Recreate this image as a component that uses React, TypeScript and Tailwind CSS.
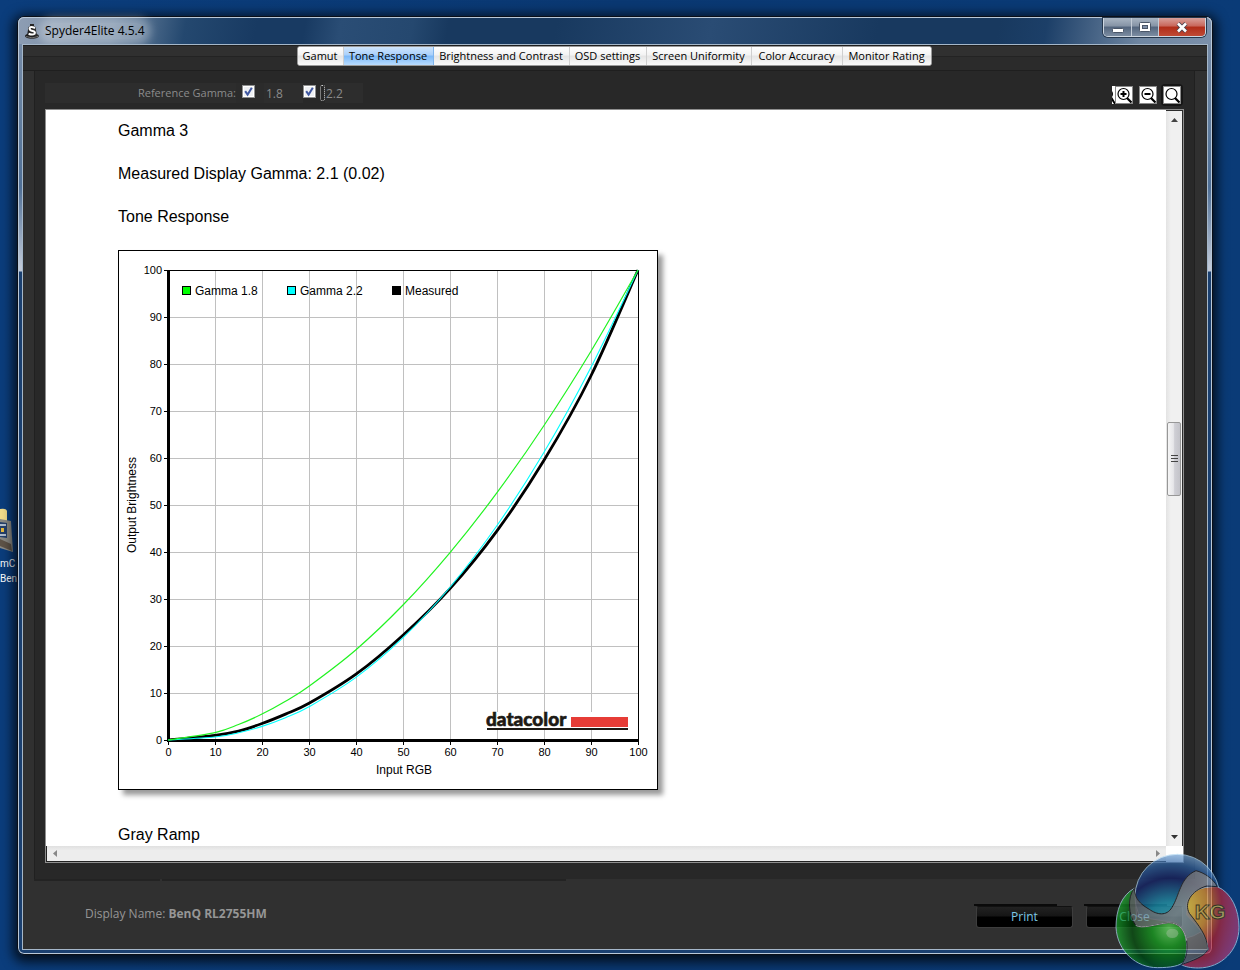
import { useState } from 'react';

const TABS = [
    { name: 'Gamut', width: 'w-[46px]' },
    { name: 'Tone Response', width: 'w-[90px]' },
    { name: 'Brightness and Contrast', width: 'w-[136px]' },
    { name: 'OSD settings', width: 'w-[77px]' },
    { name: 'Screen Uniformity', width: 'w-[105px]' },
    { name: 'Color Accuracy', width: 'w-[91px]' },
    { name: 'Monitor Rating', width: 'w-[88px]' }
];

const TICKS = [0, 10, 20, 30, 40, 50, 60, 70, 80, 90, 100];
const SAMPLES = [0, 10, 15, 20, 25, 30, 40, 50, 60, 70, 80, 90, 100];
const MEASURED = [0, 1, 1.9, 3.5, 5.5, 7.8, 14, 22.3, 32.2, 44.5, 59.5, 77.5, 100];

const plotX = (v: number) => 50 + v * 4.7;
const plotY = (v: number) => 490 - v * 4.7;

// Smooth line through the sample points (Catmull-Rom to bezier)
function curve(values: number[]) {
    const pts = values.map((v, i) => [plotX(SAMPLES[i]), plotY(v)]);
    let d = `M${pts[0][0]},${pts[0][1]}`;
    for (let i = 0; i < pts.length - 1; i++) {
        const a = pts[Math.max(i - 1, 0)];
        const b = pts[i];
        const c = pts[i + 1];
        const e = pts[Math.min(i + 2, pts.length - 1)];
        d += ` C${b[0] + (c[0] - a[0]) / 6},${b[1] + (c[1] - a[1]) / 6} ${c[0] - (e[0] - b[0]) / 6},${c[1] - (e[1] - b[1]) / 6} ${c[0]},${c[1]}`;
    }
    return d;
}

const gammaCurve = (gamma: number) => curve(SAMPLES.map(s => 100 * Math.pow(s / 100, gamma)));

function SpyderIcon() {
    return (
        <svg viewBox="0 0 14 16" className="h-4 w-3.5">
            <ellipse cx="7" cy="13" rx="7" ry="2.8" fill="#1b1b1b" />
            <path d="M5 1 H9 V3 L10.5 4 L12 12.5 Q7 15 2 12.5 L3.5 4 L5 3 Z" fill="#222" />
            <path d="M10 5 Q5 3 4.6 5.4 Q4.6 7.4 7.6 8 Q10.8 8.8 9.6 10.8 Q7.5 12.4 3.6 10.8" fill="none" stroke="#fff" strokeWidth="2" />
            <path d="M1 13.5 Q7 16.2 13 13.5" fill="none" stroke="#888" strokeWidth="0.8" />
        </svg>
    );
}

function WindowButtons() {
    return (
        <div className="flex h-[19px] overflow-hidden rounded-b-[5px] border border-t-0 border-[#cdd6e0] shadow-[0_0_0_1px_#26384d]">
            <button aria-label="Minimize" className="flex w-7 items-center justify-center border-r border-[#c3ccd7] bg-[linear-gradient(#a9b5c3,#8593a5_45%,#53657d_50%,#7b8ca1)]">
                <svg viewBox="0 0 12 5" className="mt-1.5 h-[5px] w-3">
                    <rect x="0.5" y="0.5" width="11" height="4" rx="1" fill="#fff" stroke="#4a5668" />
                </svg>
            </button>
            <button aria-label="Maximize" className="flex w-[27px] items-center justify-center border-r border-[#c3ccd7] bg-[linear-gradient(#a9b5c3,#8593a5_45%,#53657d_50%,#7b8ca1)]">
                <svg viewBox="0 0 12 10" className="h-2.5 w-3">
                    <rect x="0.5" y="0.5" width="11" height="9" rx="1" fill="#fff" stroke="#4a5668" />
                    <rect x="3.5" y="3.5" width="5" height="3" fill="#8090a8" stroke="#4a5668" />
                </svg>
            </button>
            <button aria-label="Close window" className="flex w-[46px] items-center justify-center bg-[linear-gradient(#d9a19b,#c8665a_45%,#b02c18_50%,#c04a35)]">
                <svg viewBox="0 0 12 11" className="h-[11px] w-3">
                    <path d="M2 1.5 L10 9.5 M10 1.5 L2 9.5" stroke="#4d4450" strokeWidth="4.4" />
                    <path d="M2 1.5 L10 9.5 M10 1.5 L2 9.5" stroke="#fff" strokeWidth="2.6" />
                </svg>
            </button>
        </div>
    );
}

function GammaCheckbox({ id, checked, onChange }: { id: string; checked: boolean; onChange: (v: boolean) => void }) {
    return (
        <span className="grid size-[13px]">
            <input
                id={id}
                type="checkbox"
                checked={checked}
                onChange={e => onChange(e.target.checked)}
                className="col-start-1 row-start-1 size-[13px] appearance-none border border-[#8e8f8f] bg-[#eef0f3] outline-none ring-1 ring-inset ring-white"
            />
            {checked && (
                <svg viewBox="0 0 13 13" className="pointer-events-none col-start-1 row-start-1 size-[13px]">
                    <path d="M3.2 6.2 L5.6 9.6 L9.8 2.8" fill="none" stroke="#3f57a0" strokeWidth="2" />
                </svg>
            )}
        </span>
    );
}

function ZoomButton({ label, mark }: { label: string; mark?: string }) {
    return (
        <button aria-label={label} className="size-[18px] border border-[#8a8a8a] bg-white">
            <svg viewBox="0 0 16 16" className="size-4">
                <circle cx="7.5" cy="7" r="5.5" fill="none" stroke="#000" strokeWidth="1.2" />
                <path d="M11 11 L15.5 15.5" stroke="#000" strokeWidth="2.2" />
                {mark && <path d={mark} stroke="#000" strokeWidth="2" />}
            </svg>
        </button>
    );
}

function ToneChart() {
    return (
        <svg
            viewBox="0 0 540 540"
            role="img"
            aria-label="Tone Response"
            className="block size-[540px] bg-white font-['Liberation_Sans',Arial,sans-serif] text-[11px] shadow-[5px_5px_5px_rgba(0,0,0,0.4)]"
        >
            <rect x="0.5" y="0.5" width="539" height="539" fill="#fff" stroke="#000" />
            <g stroke="#c0c0c0" shapeRendering="crispEdges">
                {TICKS.slice(1, -1).map(t => (
                    <g key={t}>
                        <path d={`M${Math.round(plotX(t)) + 0.5},21 V490`} />
                        <path d={`M51,${Math.round(plotY(t)) + 0.5} H520`} />
                    </g>
                ))}
            </g>
            <g stroke="#000" shapeRendering="crispEdges">
                <path d="M50,20.5 H521 M520.5,20 V490" />
                {TICKS.map(t => (
                    <g key={t}>
                        <path d={`M${Math.round(plotX(t)) + 0.5},490 v5`} />
                        <path d={`M46,${Math.round(plotY(t)) + 0.5} h5`} />
                    </g>
                ))}
                <path d="M50.5,20 V492 M49,490.5 H521" strokeWidth="3" />
            </g>

            <path d={curve(MEASURED)} fill="none" stroke="#000" strokeWidth="2.8" />
            <path d={gammaCurve(2.2)} fill="none" stroke="#00ffff" strokeWidth="1.1" />
            <path d={gammaCurve(1.8)} fill="none" stroke="#21f321" strokeWidth="1.2" />

            {TICKS.map(t => (
                <g key={t}>
                    <text x={plotX(t) + 0.5} y="506" textAnchor="middle">{t}</text>
                    <text x="44" y={plotY(t) + 4} textAnchor="end">{t}</text>
                </g>
            ))}

            <g className="text-xs">
                <g stroke="#000" shapeRendering="crispEdges">
                    <rect x="64.5" y="36.5" width="8" height="8" fill="#00ff00" />
                    <rect x="169.5" y="36.5" width="8" height="8" fill="#00ffff" />
                    <rect x="274.5" y="36.5" width="8" height="8" fill="#000" />
                </g>
                <text x="77" y="45">Gamma 1.8</text>
                <text x="182" y="45">Gamma 2.2</text>
                <text x="287" y="45">Measured</text>
                <text x="286" y="524" textAnchor="middle">Input RGB</text>
                <text transform="translate(18 255) rotate(-90)" textAnchor="middle">Output Brightness</text>
            </g>

            {/* datacolor logo */}
            <rect x="369" y="462" width="141" height="18" fill="#fff" />
            <text
                x="368"
                y="476"
                className="font-['Lato',sans-serif] text-[19px] font-black"
                fill="#1d1a15"
                stroke="#1d1a15"
                strokeWidth="0.6"
            >
                datacolor
            </text>
            <rect x="453" y="467" width="57" height="10" fill="#e63c36" />
            <rect x="369" y="478" width="141" height="2" fill="#1d1a15" />
        </svg>
    );
}

function VerticalScrollbar() {
    return (
        <div className="flex w-[17px] flex-col items-center border-t border-r border-[#2c2c2c] bg-[linear-gradient(to_right,#e3e3e3,#f0f0f0_30%,#f0f0f0)]">
            <button aria-label="Scroll up" className="flex h-[18px] w-full items-center justify-center">
                <svg viewBox="0 0 7 4" className="h-1 w-[7px]"><path d="M0 4 L3.5 0 L7 4 Z" fill="#444" /></svg>
            </button>
            <div className="flex-[293]" />
            <div className="flex h-[74px] w-3.5 flex-col items-center justify-center gap-0.5 rounded-xs border border-[#979797] bg-[linear-gradient(to_right,#f5f5f5,#e6e6e9_45%,#cfcfd5_55%,#c3c3c9)]">
                <div className="h-px w-[7px] bg-[#444]" />
                <div className="h-px w-[7px] bg-[#444]" />
                <div className="h-px w-[7px] bg-[#444]" />
            </div>
            <div className="flex-[333]" />
            <button aria-label="Scroll down" className="flex h-[18px] w-full items-center justify-center">
                <svg viewBox="0 0 7 4" className="h-1 w-[7px]"><path d="M0 0 L3.5 4 L7 0 Z" fill="#333" /></svg>
            </button>
        </div>
    );
}

function HorizontalScrollbar() {
    return (
        <div className="flex h-4 bg-white pr-[17px]">
            <div className="flex flex-1 items-center justify-between border-b border-l border-[#222] bg-[linear-gradient(#e0e0e0,#ededed_30%,#ededed)] px-1.5">
                <button aria-label="Scroll left" className="flex h-full items-center">
                    <svg viewBox="0 0 4 7" className="h-[7px] w-1"><path d="M4 0 L0 3.5 L4 7 Z" fill="#888" /></svg>
                </button>
                <button aria-label="Scroll right" className="flex h-full items-center">
                    <svg viewBox="0 0 4 7" className="h-[7px] w-1"><path d="M0 0 L4 3.5 L0 7 Z" fill="#888" /></svg>
                </button>
            </div>
        </div>
    );
}

function FooterButton({ children }: { children: string }) {
    return (
        <div className="w-[97px]">
            <div className="-ml-0.5 h-0.5 w-[83px] bg-[#0a0a0a]" />
            <button className="block h-[22px] w-full rounded-[3px] border border-[#3d3d3d] border-t-[#111] bg-[linear-gradient(#222,#151515_45%,#000_50%,#000)] text-xs leading-[18px] text-[#7cc9e6]">
                {children}
            </button>
        </div>
    );
}

function DesktopShortcut() {
    return (
        <div className="absolute top-[508px] left-0 font-['Roboto','Open_Sans',sans-serif] text-[10px] leading-[15px] text-white">
            <svg viewBox="0 0 17 48" className="h-12 w-[17px]">
                <path d="M0 1 Q6 0 7 3 V34 H0 Z" fill="#f2dc8a" />
                <path d="M0 11 L11 13 L13 44 L0 40 Z" fill="#8b8a84" />
                <path d="M0 14 L7 15 V30 L0 29 Z" fill="#25406b" />
                <path d="M0 17 H6 M0 27 H6" stroke="#dfe6ee" strokeWidth="1.5" />
                <rect x="1" y="20" width="3" height="4" fill="#e6b93c" />
                <path d="M0 31 L11 36 L12 43 L0 38 Z" fill="#5e5347" />
            </svg>
            <div>mC</div>
            <div>Ben</div>
        </div>
    );
}

function KgBadge() {
    return (
        <svg viewBox="225 99 375 351" className="pointer-events-none absolute right-0 bottom-0 h-[117px] w-[125px] opacity-70">
            <defs>
                <radialGradient id="kgBlue" cx="0.42" cy="0.9" r="0.95">
                    <stop offset="0" stopColor="#5fdcec" />
                    <stop offset="0.35" stopColor="#1b9fc0" />
                    <stop offset="0.65" stopColor="#10216c" />
                    <stop offset="0.82" stopColor="#2a5fa2" />
                    <stop offset="1" stopColor="#8cbbe6" />
                </radialGradient>
                <radialGradient id="kgGreen" cx="0.75" cy="0.5" r="0.8">
                    <stop offset="0" stopColor="#6fee6a" />
                    <stop offset="0.3" stopColor="#14a81e" />
                    <stop offset="0.65" stopColor="#04520e" />
                    <stop offset="1" stopColor="#22c238" />
                </radialGradient>
                <radialGradient id="kgRed" cx="0.1" cy="0.25" r="1">
                    <stop offset="0" stopColor="#ffe04e" />
                    <stop offset="0.35" stopColor="#e09a3a" />
                    <stop offset="0.6" stopColor="#b8283c" />
                    <stop offset="1" stopColor="#a83f86" />
                </radialGradient>
                <linearGradient id="kgSteel" x1="0" y1="0" x2="1" y2="1">
                    <stop offset="0" stopColor="#55575c" />
                    <stop offset="0.5" stopColor="#a4a7ad" />
                    <stop offset="1" stopColor="#606267" />
                </linearGradient>
            </defs>
            <g stroke="#b4daf4" strokeWidth="3">
                <circle cx="412" cy="230" r="127" fill="url(#kgBlue)" />
                <path d="M440 250 C450 215 480 198 532 200 C575 218 597 270 597 322 C597 390 545 444 475 444 C452 444 434 440 424 434 C450 420 490 410 504 388 C500 345 470 318 440 285 Z" fill="url(#kgRed)" />
                <path d="M283 205 C245 225 228 270 228 322 C232 395 290 443 352 443 C392 443 420 438 432 425 C450 380 438 310 395 306 L290 290 Z" fill="url(#kgGreen)" />
            </g>
            <path
                d="M468 152 C420 172 418 228 396 262 C380 290 350 284 328 268 C300 252 284 236 283 205 C262 230 264 285 287 316 C305 328 350 312 385 308 C420 308 436 335 440 362 C444 400 436 420 424 434 C456 422 492 412 504 388 C500 345 478 318 448 280 C432 250 452 212 500 198 L532 200 C520 176 492 158 468 152 Z"
                fill="url(#kgSteel)"
                fillOpacity="0.85"
                stroke="#24262b"
                strokeWidth="3"
            />
            <path d="M287 316 C305 328 350 312 385 308 C420 308 436 335 440 362" fill="none" stroke="#d5d8dc" strokeWidth="3" />
            <ellipse cx="397" cy="340" rx="18" ry="14" fill="#c9f5c6" opacity="0.5" />
            <text x="464" y="298" className="font-['Liberation_Sans',Arial,sans-serif] text-[62px] font-bold" fill="#e8c860" stroke="#4c3d18" strokeWidth="3">KG</text>
        </svg>
    );
}

export default function App() {
    const [activeTab, setActiveTab] = useState('Tone Response');
    const [gamma18, setGamma18] = useState(true);
    const [gamma22, setGamma22] = useState(true);

    return (
        <div className="relative flex min-h-screen flex-col overflow-hidden bg-[linear-gradient(to_right,#0b3d7c,#0a3872_50%,#0a3b77)] pt-4 pr-[27px] pb-[15px] pl-[17px] font-['Open_Sans','Noto_Sans',sans-serif] text-xs">
            <DesktopShortcut />

            {/* WINDOW FRAME */}
            <div className="relative flex flex-1 flex-col rounded-[7px] border border-[#0a0f18] bg-[linear-gradient(#7d90aa,#5d7a9c_120px,#4f6f96_170px,#c0c9d8_250px,#c0c9d8_254px,#1b4070_255px,#1b4070)] px-1 pb-1 shadow-[inset_0_0_0_1px_#b9c8d8,0_3px_12px_4px_rgba(0,0,0,0.75)]">
                {/* TITLE BAR */}
                <div className="-mx-1 flex h-[27px] items-start justify-between rounded-t-md border-t border-x border-[#b9c8d8] bg-[linear-gradient(100deg,#8d9db3,#7088a3_8%,#24486f_14%,#183a62_20%,#183a62_24%,#2a4d75_27%,#25486f_33%,#18395f_36%,#18395f_45%,#2a4c74_58%,#18395f_72%,#18395f_82%,#1c3f68_86%,#6f86a1_94%,#7b90ab)] pr-[5px] pl-[6px]">
                    <div className="flex h-[26px] items-center gap-1.5">
                        <SpyderIcon />
                        <h1 className="rounded-full bg-white/30 text-xs text-black shadow-[0_0_8px_6px_rgba(255,255,255,0.3)]">Spyder4Elite 4.5.4</h1>
                    </div>
                    <WindowButtons />
                </div>

                <div className="flex flex-1 flex-col border border-[#a5b7c9] bg-[#303030]">
                    {/* TABS */}
                    <nav className="flex h-[26px] justify-center border-t border-b border-[#1f1f1f] bg-[linear-gradient(#303030_10px,#232323_10px,#232323_11px,#2b2b2b_11px)] pr-0.5">
                        <div className="flex h-5 overflow-hidden rounded-[3px] border border-[#9a9a9a] bg-white">
                            {TABS.map(tab => (
                                <button
                                    key={tab.name}
                                    type="button"
                                    onClick={() => setActiveTab(tab.name)}
                                    className={`flex items-center justify-center border-r text-[11px] whitespace-nowrap text-black last:border-r-0 ${tab.width} ${activeTab === tab.name
                                        ? 'border-[#7fb4ec] bg-[linear-gradient(#cfe5fc,#a9d0fb_45%,#7ab8f8_50%,#b9dcff)]'
                                        : 'border-[#cfcfcf] bg-[linear-gradient(#fff,#f3f3f3_45%,#e4e4e4_50%,#fafafa)]'
                                        }`}
                                >
                                    {tab.name}
                                </button>
                            ))}
                        </div>
                    </nav>

                    {/* REPORT PANEL */}
                    <main className="mr-3 ml-[11px] flex flex-1 flex-col border-x border-[#202020] bg-[#282828] pr-2.5 pb-4 pl-2.5">
                        <div className="flex h-[38px] items-start justify-between pt-3">
                            <div className="flex h-5 items-center text-[#8b8b8b]">
                                <span className="h-5 w-[191px] bg-[#2d2d2d] text-right text-[11px] leading-5">Reference Gamma:</span>
                                <span className="flex h-5 w-7 items-start bg-[#2b2b2b] pt-0.5 pl-1.5">
                                    <GammaCheckbox id="gamma18" checked={gamma18} onChange={setGamma18} />
                                </span>
                                <label htmlFor="gamma18" className="h-5 w-[39px] bg-[#2d2d2d] pl-0.5 leading-[22px]">1.8</label>
                                <span className="flex h-5 items-start gap-1 pt-0.5">
                                    <GammaCheckbox id="gamma22" checked={gamma22} onChange={setGamma22} />
                                    <span className="h-4 w-[5px] rounded-xs border border-dotted border-[#d0d0d0]" />
                                </span>
                                <label htmlFor="gamma22" className="h-5 w-[38px] bg-[#2d2d2d] pl-px leading-[22px]">2.2</label>
                            </div>
                            <div className="flex items-start gap-1.5 pt-[3px] pr-[3px]">
                                <div className="flex">
                                    <svg viewBox="0 0 3 18" className="h-[18px] w-[3px]">
                                        <rect width="3" height="18" fill="#fff" />
                                        <path d="M0 5 Q2 8 0 11 Z M0 11 L3 16 V18 H2 L0 15 Z" fill="#000" />
                                    </svg>
                                    <ZoomButton label="Zoom in" mark="M4.5 7 H10.5 M7.5 4 V10" />
                                </div>
                                <ZoomButton label="Zoom out" mark="M4.5 7 H10.5" />
                                <div className="h-[18px] rounded-xs ring-2 ring-[#161616]">
                                    <ZoomButton label="Zoom to fit" />
                                </div>
                            </div>
                        </div>

                        <div className="flex flex-1 flex-col border border-[#8f8f8f] bg-white">
                            <div className="flex flex-1">
                                <article className="flex-1 pt-[11px] pb-px pl-[72px] font-['Liberation_Sans',Arial,sans-serif] text-base leading-5 text-black">
                                    <p>Gamma 3</p>
                                    <p className="mt-[23px]">Measured Display Gamma: 2.1 (0.02)</p>
                                    <p className="mt-[23px]">Tone Response</p>
                                    <div className="mt-[23px]">
                                        <ToneChart />
                                    </div>
                                    <p className="mt-[35px]">Gray Ramp</p>
                                </article>
                                <VerticalScrollbar />
                            </div>
                            <HorizontalScrollbar />
                        </div>
                    </main>

                    {/* FOOTER */}
                    <footer className="flex h-[70px] items-start justify-between pr-6 pl-[11px]">
                        <div className="flex-1">
                            <div className="flex gap-0.5">
                                <div className="h-0.5 w-[126px] bg-[#232323]" />
                                <div className="h-0.5 w-[404px] bg-[#232323]" />
                            </div>
                            <p className="mt-[23px] pl-[51px] leading-5 text-[#969696]">
                                Display Name: <b>BenQ RL2755HM</b>
                            </p>
                        </div>
                        <div className="flex gap-[13px] pt-[25px]">
                            <FooterButton>Print</FooterButton>
                            <FooterButton>Close</FooterButton>
                        </div>
                    </footer>
                </div>
            </div>

            <KgBadge />
        </div>
    );
}
